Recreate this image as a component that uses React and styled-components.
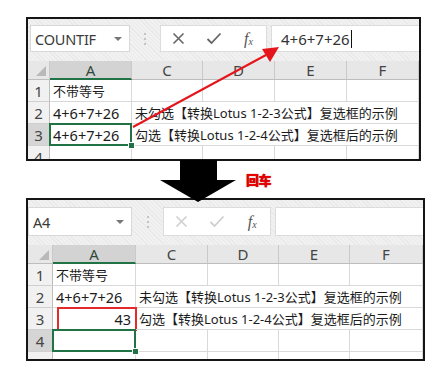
import styled, { createGlobalStyle } from "styled-components";

const Global = createGlobalStyle`
  body {
    margin: 0;
    background: #fff;
    font-family: "Noto Sans", "Noto Sans CJK SC", sans-serif;
  }
`;

const GREEN = "#217346";

const Page = styled.div`
  position: relative;
  width: 442px;
  height: 382px;
  padding-top: 17px;
  box-sizing: border-box;
  display: flex;
  flex-direction: column;
  overflow: hidden;
`;

const Panel = styled.div`
  margin-left: 26px;
  width: ${(p) => p.$w}px;
  height: ${(p) => p.$h}px;
  border: 2px solid #151515;
  box-sizing: border-box;
  background: #fff;
  overflow: hidden;
  display: flex;
  flex-direction: column;
`;

const Toolbar = styled.div`
  display: flex;
  align-items: flex-start;
  height: ${(p) => p.$h}px;
  padding-top: ${(p) => p.$pt}px;
  box-sizing: border-box;
  flex-shrink: 0;
  background: repeating-linear-gradient(
    45deg,
    #e9e9e9 0 1px,
    #f1f1f1 1px 3px
  );
`;

const NameBox = styled.div`
  width: ${(p) => p.$w}px;
  height: ${(p) => p.$h}px;
  margin-left: ${(p) => p.$ml}px;
  box-sizing: border-box;
  background: #fff;
  border: 1px solid #d8d8d8;
  display: flex;
  align-items: center;
  justify-content: space-between;
  padding: 0 7px 0 4px;
  font-size: 14.5px;
  color: #3a3a3a;
  letter-spacing: -0.2px;
`;

const Caret = styled.span`
  width: 0;
  height: 0;
  border-left: 4px solid transparent;
  border-right: 4px solid transparent;
  border-top: 4px solid #777;
`;

const Dots = styled.div`
  width: ${(p) => p.$w}px;
  height: ${(p) => p.$h}px;
  display: flex;
  flex-direction: column;
  align-items: center;
  justify-content: center;
  gap: 3px;
  & span {
    width: 2px;
    height: 2px;
    background: #c4c4c4;
  }
`;

const Buttons = styled.div`
  width: ${(p) => p.$w}px;
  height: ${(p) => p.$h}px;
  box-sizing: border-box;
  background: #fff;
  border: 1px solid #dcdcdc;
  display: grid;
  grid-template-columns: repeat(3, 1fr);
  align-items: center;
  justify-items: center;
  margin-right: 4px;
`;

const Fx = styled.span`
  font-family: "Liberation Serif", "DejaVu Serif", serif;
  font-style: italic;
  font-size: 16px;
  color: #555;
  & sub {
    font-size: 10px;
    vertical-align: baseline;
    position: relative;
    top: 1px;
  }
`;

const Formula = styled.div`
  flex: 1;
  height: ${(p) => p.$h}px;
  box-sizing: border-box;
  background: #fff;
  border: 1px solid #dcdcdc;
  border-right: none;
  display: flex;
  align-items: center;
  padding-left: 9px;
  font-size: 15px;
  color: #333;
`;

const Cursor = styled.span`
  width: 1px;
  height: 18px;
  margin-left: 1px;
  background: #111;
`;

const Grid = styled.div`
  display: grid;
  grid-template-columns: ${(p) => p.$cols.map((c) => c + "px").join(" ")};
  grid-template-rows: ${(p) => p.$hdr}px;
  grid-auto-rows: ${(p) => p.$row}px;
`;

const ColHead = styled.div`
  display: flex;
  align-items: center;
  justify-content: center;
  box-sizing: border-box;
  font-size: 15px;
  color: ${(p) => (p.$sel ? "#2f4a3a" : "#444")};
  background: ${(p) => (p.$sel ? "#d3d3d3" : "#e7e7e7")};
  border-right: 1px solid #c9c9c9;
  border-bottom: ${(p) => (p.$sel ? `2px solid ${GREEN}` : "1px solid #bdbdbd")};
`;

const CornerCell = styled.div`
  position: relative;
  background: #e7e7e7;
  border-right: 1px solid #c9c9c9;
  border-bottom: 1px solid #bdbdbd;
  &::after {
    content: "";
    position: absolute;
    right: 3px;
    bottom: 3px;
    width: 10px;
    height: 10px;
    background: #b9b9b9;
    clip-path: polygon(100% 0, 100% 100%, 0 100%);
  }
`;

const RowHead = styled.div`
  display: flex;
  align-items: center;
  justify-content: center;
  box-sizing: border-box;
  font-size: 15px;
  color: #444;
  background: ${(p) => (p.$sel ? "#d5d5d5" : "#f1f1f1")};
  border-right: 1px solid #bdbdbd;
  border-bottom: 1px solid #d0d0d0;
`;

const Cell = styled.div`
  position: relative;
  grid-column: span ${(p) => p.$span || 1};
  display: flex;
  align-items: center;
  justify-content: ${(p) => (p.$right ? "flex-end" : "flex-start")};
  padding: 0 ${(p) => (p.$right ? 4 : 0)}px 0 ${(p) => (p.$right ? 0 : 3)}px;
  box-sizing: border-box;
  white-space: nowrap;
  font-size: ${(p) => (p.$num ? 14.5 : 13)}px;
  color: #1c1c1c;
  border-right: 1px solid #d9d9d9;
  border-bottom: 1px solid #d9d9d9;
  &::after {
    content: "";
    display: ${(p) => (p.$active || p.$mark ? "block" : "none")};
    position: absolute;
    left: ${(p) => (p.$mark ? 4 : -1)}px;
    top: -1px;
    right: ${(p) => (p.$mark ? -2 : -1)}px;
    bottom: ${(p) => (p.$mark ? -2 : -1)}px;
    border: 2px solid ${(p) => (p.$mark ? "#e32b2b" : GREEN)};
    pointer-events: none;
  }
`;

const Handle = styled.span`
  position: absolute;
  right: -4px;
  bottom: -4px;
  width: 5px;
  height: 5px;
  background: ${GREEN};
  border: 1px solid #fff;
  z-index: 1;
`;

const Between = styled.div`
  display: flex;
  align-items: flex-start;
  height: 37px;
  flex-shrink: 0;
`;

const BigArrow = styled.svg`
  position: relative;
  z-index: 2;
  margin-left: 159px;
  margin-top: -1px;
  overflow: visible;
`;

const Enter = styled.span`
  margin-left: 9px;
  margin-top: 12px;
  font-family: "Noto Sans CJK SC", sans-serif;
  font-weight: 900;
  font-size: 13px;
  line-height: 1;
  color: #e80000;
  text-shadow: 0 0 1px #7a0000;
  letter-spacing: -0.5px;
`;

const Overlay = styled.svg`
  position: absolute;
  left: 0;
  top: 0;
  pointer-events: none;
`;

function Sheet({ cfg }) {
  const t = cfg.toolbar;
  return (
    <Panel $w={cfg.w} $h={cfg.h}>
      <Toolbar $h={t.h} $pt={t.pt}>
        <NameBox $w={t.nameW} $h={t.boxH} $ml={t.nameML}>
          {cfg.name}
          <Caret />
        </NameBox>
        <Dots $w={t.dotsW} $h={t.boxH}>
          <span />
          <span />
          <span />
        </Dots>
        <Buttons $w={t.btnW} $h={t.boxH}>
          <svg width="13" height="13" viewBox="0 0 13 13">
            <path d="M1.5 1.5 L11.5 11.5 M11.5 1.5 L1.5 11.5" stroke={cfg.dim ? "#cfcfcf" : "#666"} strokeWidth="1.6" fill="none" />
          </svg>
          <svg width="16" height="13" viewBox="0 0 16 13">
            <path d="M1.5 7 L5.5 11 L14.5 1.5" stroke={cfg.dim ? "#cfcfcf" : "#666"} strokeWidth="1.8" fill="none" />
          </svg>
          <Fx>
            f<sub>x</sub>
          </Fx>
        </Buttons>
        <Formula $h={t.boxH}>
          {cfg.formula}
          {cfg.formula && <Cursor />}
        </Formula>
      </Toolbar>
      <Grid $cols={cfg.cols} $hdr={cfg.hdrH} $row={cfg.rowH}>
        <CornerCell />
        {["A", "C", "D", "E", "F"].map((c, i) => (
          <ColHead key={c} $sel={i === 0}>
            {c}
          </ColHead>
        ))}
        {cfg.rows.map((r) => [
          <RowHead key={"h" + r.n} $sel={r.sel}>
            {r.n}
          </RowHead>,
          ...r.cells.map((c, i) => (
            <Cell
              key={r.n + "-" + i}
              $span={c.span}
              $num={c.num}
              $right={c.right}
              $active={c.active}
              $mark={c.mark}
            >
              {c.t}
              {c.active && <Handle />}
            </Cell>
          )),
        ])}
      </Grid>
    </Panel>
  );
}

const empty = () => [{}, {}, {}, {}, {}];
const LINE2 = "未勾选【转换Lotus 1-2-3公式】复选框的示例";
const LINE3 = "勾选【转换Lotus 1-2-4公式】复选框后的示例";

const before = {
  w: 395,
  h: 144,
  name: "COUNTIF",
  formula: "4+6+7+26",
  toolbar: { h: 42, pt: 6, boxH: 27, nameW: 100, nameML: 2, dotsW: 30, btnW: 107 },
  cols: [22, 82, 71, 72, 72, 72],
  hdrH: 19,
  rowH: 22,
  rows: [
    { n: 1, cells: [{ t: "不带等号" }, {}, {}, {}, {}] },
    { n: 2, cells: [{ t: "4+6+7+26", num: true }, { t: LINE2, span: 4 }] },
    { n: 3, sel: true, cells: [{ t: "4+6+7+26", num: true, active: true }, { t: LINE3, span: 4 }] },
    { n: 4, cells: empty() },
  ],
};

const after = {
  w: 399,
  h: 163,
  name: "A4",
  formula: "",
  dim: true,
  toolbar: { h: 45, pt: 7, boxH: 29, nameW: 104, nameML: 0, dotsW: 31, btnW: 108 },
  cols: [25, 83, 72, 71, 71, 73],
  hdrH: 19,
  rowH: 22,
  rows: [
    { n: 1, cells: [{ t: "不带等号" }, {}, {}, {}, {}] },
    { n: 2, cells: [{ t: "4+6+7+26", num: true }, { t: LINE2, span: 4 }] },
    { n: 3, cells: [{ t: "43", num: true, right: true, mark: true }, { t: LINE3, span: 4 }] },
    { n: 4, sel: true, cells: [{ active: true }, {}, {}, {}, {}] },
    { n: 5, cells: empty() },
  ],
};

export default function App() {
  return (
    <Page>
      <Global />
      <Sheet cfg={before} />
      <Between>
        <BigArrow width="78" height="42" viewBox="0 0 78 42">
          <path d="M21 0 H58 V20 H77 L39 42 L1 20 H21 Z" fill="#000" />
        </BigArrow>
        <Enter>回车</Enter>
      </Between>
      <Sheet cfg={after} />
      <Overlay width="442" height="382" viewBox="0 0 442 382">
        <line x1="133" y1="127" x2="266" y2="55" stroke="#e5161b" strokeWidth="2" />
        <path d="M279 47 L262 49 L270 62 Z" fill="#e5161b" />
      </Overlay>
    </Page>
  );
}
